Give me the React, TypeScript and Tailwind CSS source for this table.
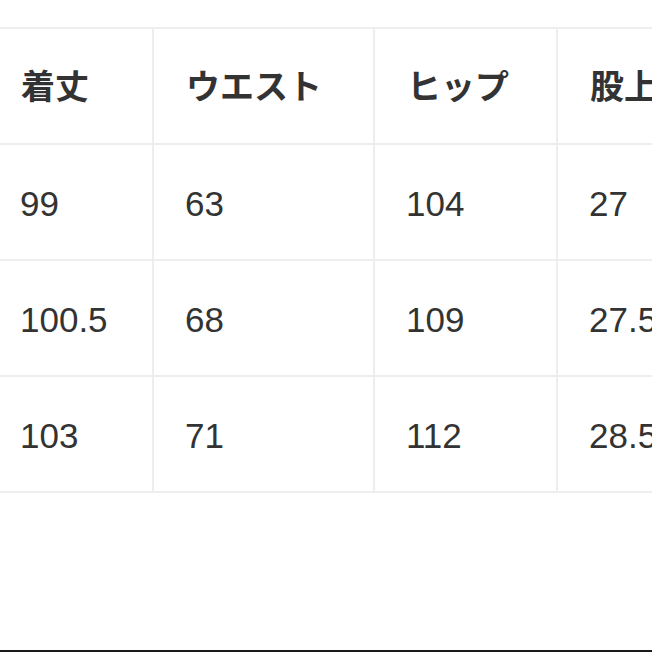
import React from 'react';

const headers = ['着丈', 'ウエスト', 'ヒップ', '股上'];
const rows = [
  ['99', '63', '104', '27'],
  ['100.5', '68', '109', '27.5'],
  ['103', '71', '112', '28.5'],
];

// column widths include the 2px right border
const colClass = ['w-[165px]', 'w-[221px]', 'w-[183px]', 'w-[220px]'];

const App = () => {
  return (
    <div className="w-[652px] h-[652px] bg-white overflow-hidden flex flex-col">
      <div className="flex-1 pt-[27px]">
        <div className="ml-[-11px] w-[789px] border-t-2 border-[#eeeeee]">
          {/* Header */}
          <div className="flex border-b-2 border-[#eeeeee]">
            {headers.map((h, i) => (
              <div
                key={h}
                className={`${colClass[i]} shrink-0 h-[114px] border-r-2 border-[#eeeeee] flex items-center pl-[32px] pb-[4px] text-[34px] font-bold text-[#333333]`}
                style={{ fontFamily: '"Noto Sans CJK JP", "Noto Sans", sans-serif' }}
              >
                {h}
              </div>
            ))}
          </div>

          {/* Rows */}
          {rows.map((r, ri) => (
            <div key={ri} className="flex border-b-2 border-[#eeeeee]">
              {r.map((v, i) => (
                <div
                  key={i}
                  className={`${colClass[i]} shrink-0 h-[114px] border-r-2 border-[#eeeeee] flex items-center pl-[31px] pt-[4px] text-[35px] text-[#333333]`}
                  style={{ fontFamily: '"Liberation Sans", Arial, sans-serif' }}
                >
                  {v}
                </div>
              ))}
            </div>
          ))}
        </div>
      </div>
      <div className="h-[2px] bg-[#1a1a1a]" />
    </div>
  );
};

export default App;
